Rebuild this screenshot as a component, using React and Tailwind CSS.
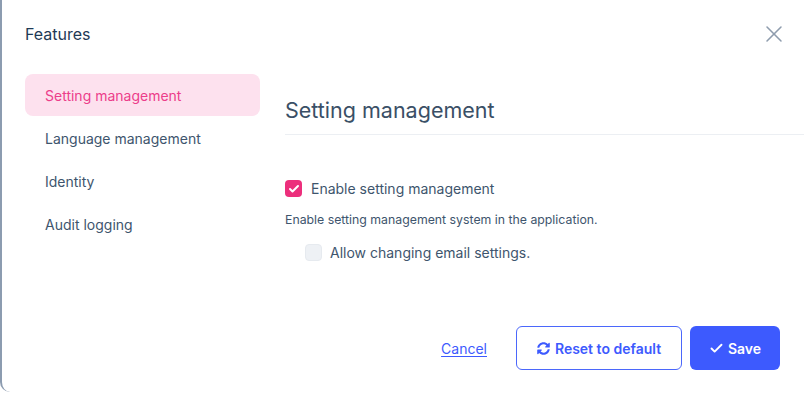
import { X, Check } from 'lucide-react';
import { FaSyncAlt } from 'react-icons/fa';

const items = ['Setting management', 'Language management', 'Identity', 'Audit logging'];

export default function App() {
  return (
    <div className="w-[804px] h-[393px] bg-white overflow-hidden" style={{ fontFamily: 'Inter, "Noto Sans", sans-serif' }}>
      <div className="h-[392px] border-l-2 border-[#8c9cb0] rounded-bl-[10px] flex flex-col pl-[23px] pr-[24px]">
        <div className="flex items-center justify-between pt-[22px] h-[46px]">
          <span className="text-[16px] leading-6 text-[#1f3a56]">Features</span>
          <X className="w-[28px] h-[28px] text-[#8e9cad] -mr-[8px]" strokeWidth={1.3} />
        </div>

        <div className="flex flex-1 mt-[28px] gap-[25px]">
          <nav className="w-[235px] flex flex-col">
            {items.map((label, i) => (
              <div
                key={label}
                className={
                  i === 0
                    ? 'h-[42px] mb-px flex items-center px-5 rounded-lg bg-[#fde1ee] text-[#ec3d8a] text-[14px]'
                    : 'h-[43px] flex items-center px-5 text-[#3e556d] text-[14px]'
                }
              >
                {label}
              </div>
            ))}
          </nav>

          <div className="flex-1 flex flex-col -mr-[24px]">
            <h2 className="mt-[22px] pb-[10px] text-[21.5px] leading-7 text-[#3a4f66] border-b border-[#eceff3]">
              Setting management
            </h2>

            <label className="mt-[45px] flex items-center gap-[9px] text-[14px] leading-4 text-[#3e556d]">
              <span className="w-[17px] h-[17px] rounded-[4px] bg-[#ec2f7c] flex items-center justify-center">
                <Check className="w-[12px] h-[12px] text-white" strokeWidth={4} />
              </span>
              Enable setting management
            </label>

            <p className="mt-[15px] text-[12.3px] leading-4 text-[#3e556d]">
              Enable setting management system in the application.
            </p>

            <label className="mt-[16px] ml-[20px] flex items-center gap-[8px] text-[14px] leading-4 text-[#3e556d]">
              <span className="w-[17px] h-[17px] rounded-[4px] bg-[#eef1f5] border border-[#e6eaef]" />
              Allow changing email settings.
            </label>

            <div className="mt-auto mb-[22px] mr-[24px] flex items-center justify-end">
              <a href="#" className="text-[14px] text-[#3d5afe] underline underline-offset-2 mr-[29px]">
                Cancel
              </a>
              <button className="h-[44px] w-[166px] rounded-md border border-[#4b67fb] text-[#3d5afe] text-[14px] font-semibold flex items-center justify-center gap-[5px]">
                <FaSyncAlt className="w-[13px] h-[13px]" />
                Reset to default
              </button>
              <button className="ml-[8px] h-[44px] w-[90px] rounded-md bg-[#3d5afe] text-white text-[14px] font-semibold flex items-center justify-center gap-[4px]">
                <Check className="w-[15px] h-[15px]" strokeWidth={3} />
                Save
              </button>
            </div>
          </div>
        </div>
      </div>
    </div>
  );
}
